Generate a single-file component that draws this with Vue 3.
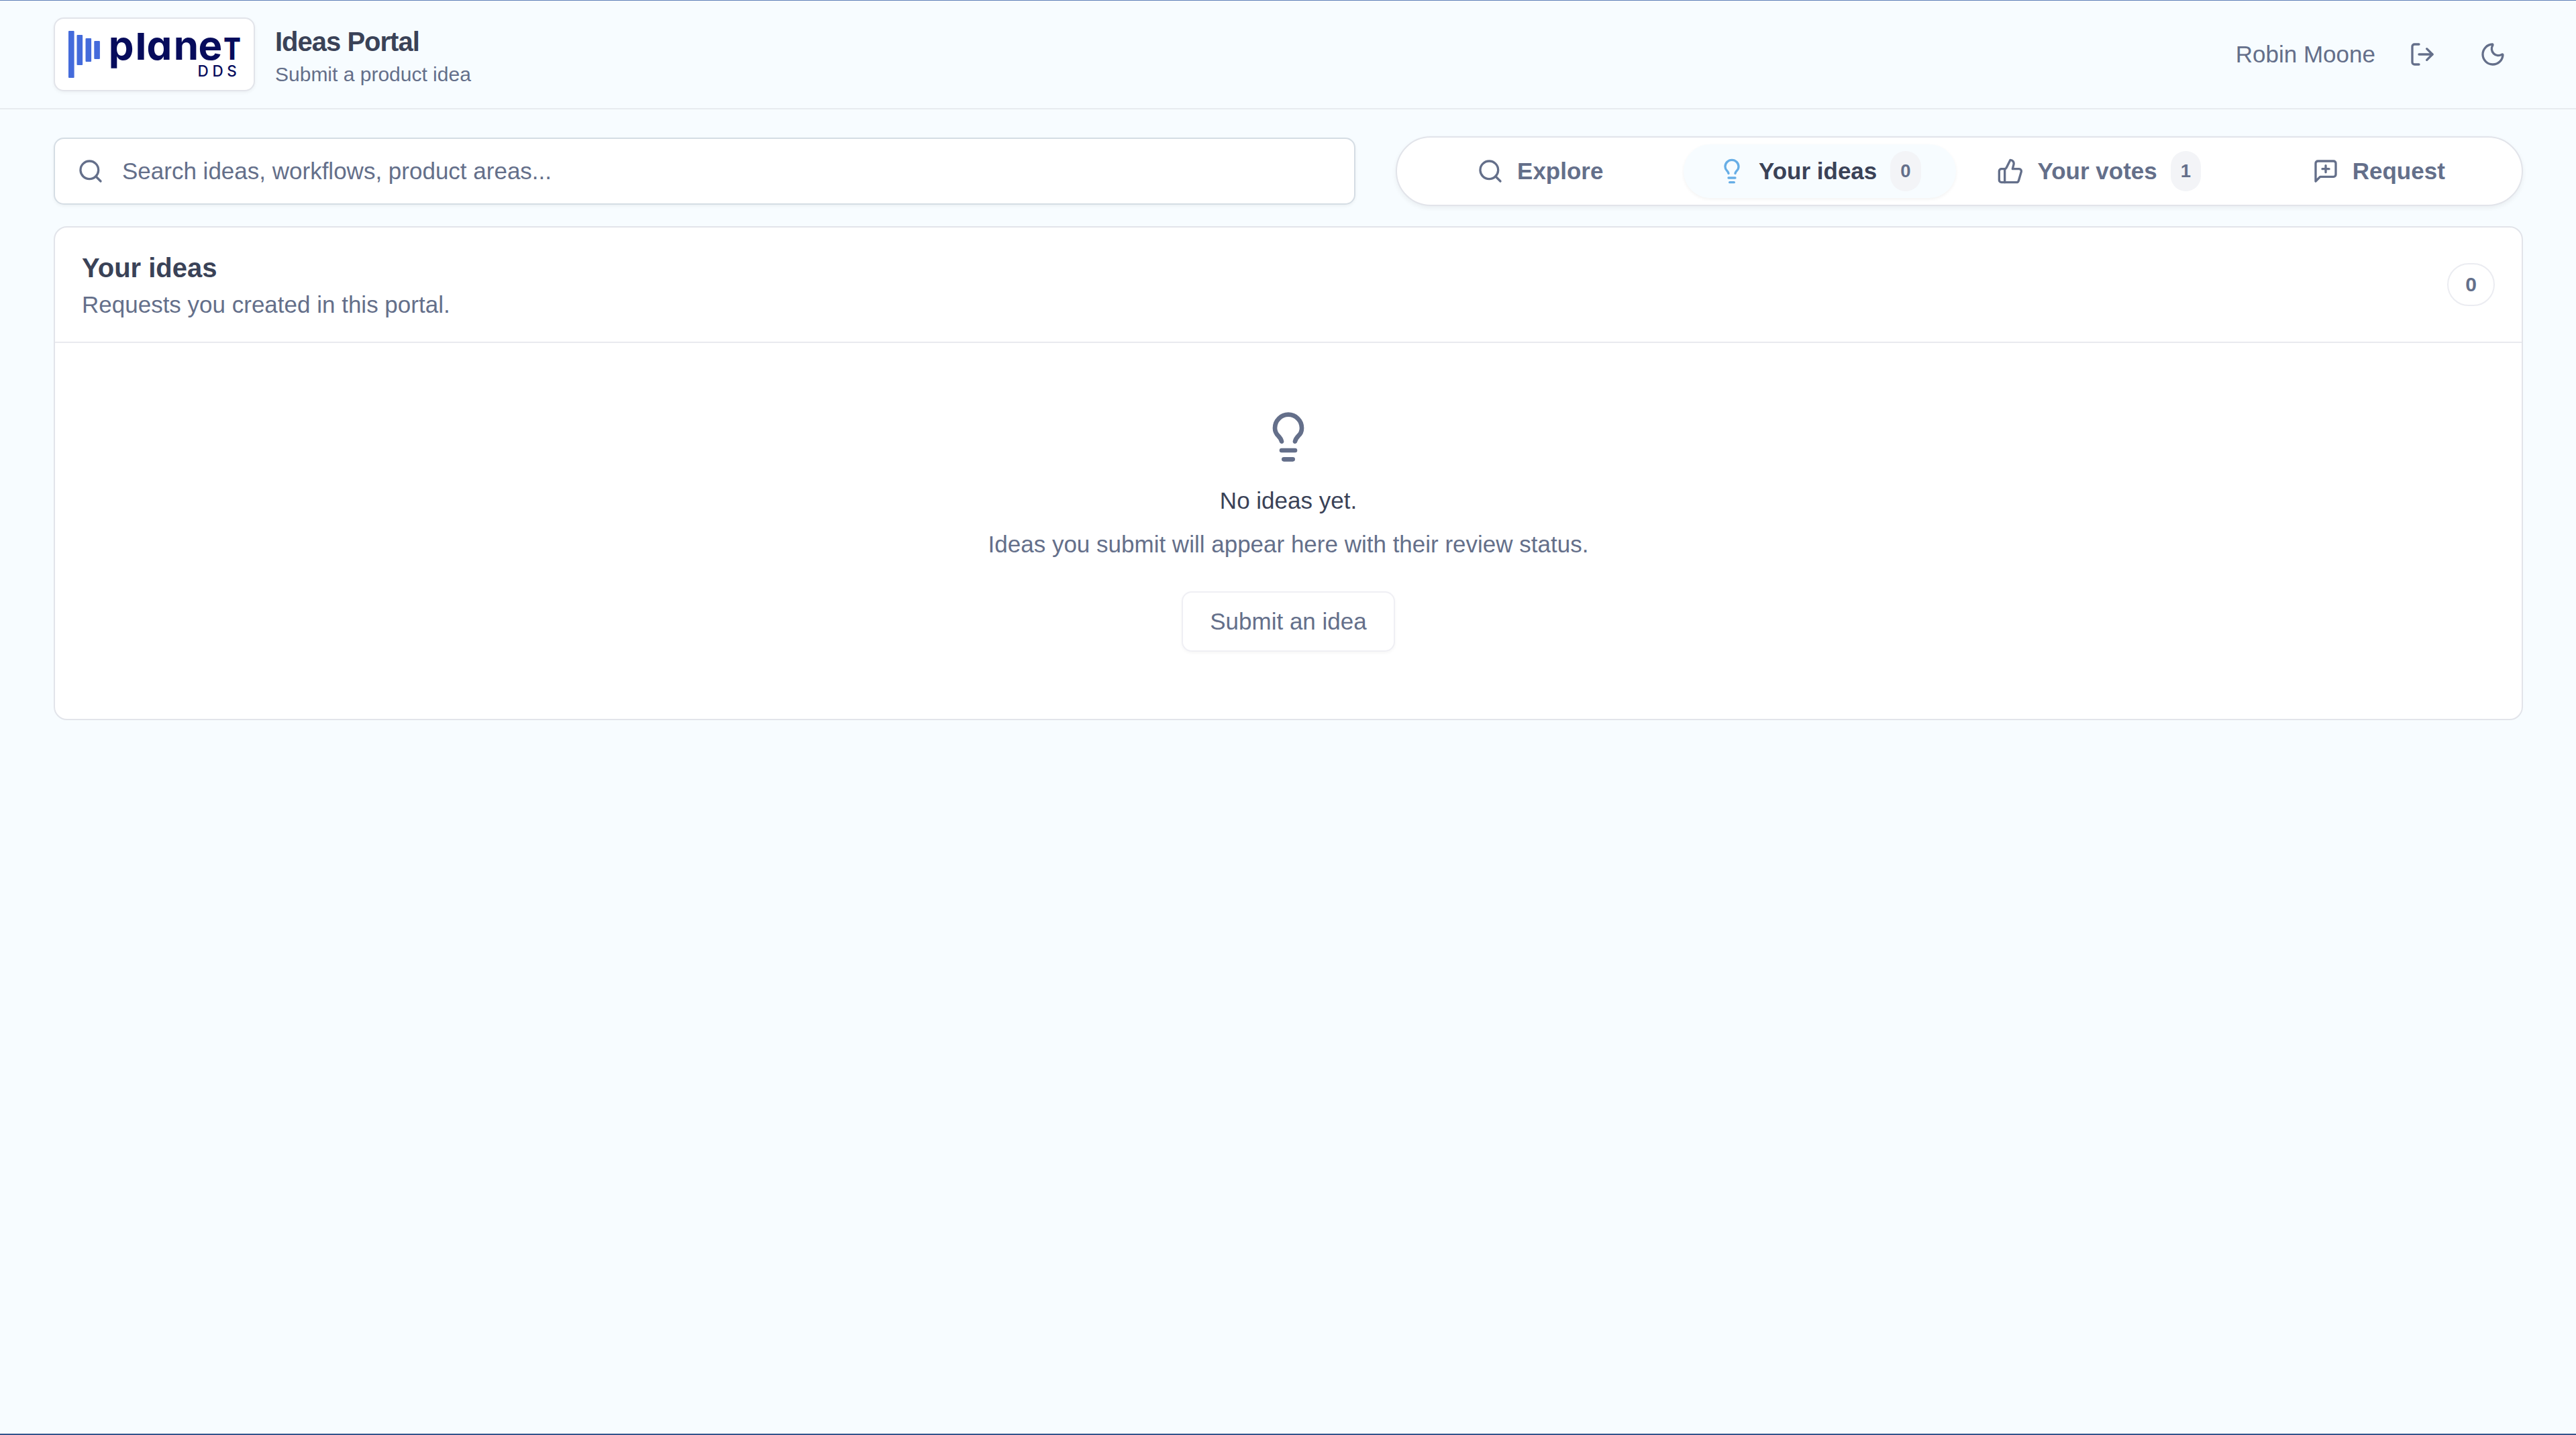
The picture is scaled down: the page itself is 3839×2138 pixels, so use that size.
<script setup>
import { ref } from "vue";

const user = "Robin Moone";
const search = ref("");
const activeTab = ref("ideas");

const tabs = [
  { id: "explore", label: "Explore", icon: "search" },
  { id: "ideas", label: "Your ideas", icon: "bulb", count: 0 },
  { id: "votes", label: "Your votes", icon: "thumb", count: 1 },
  { id: "request", label: "Request", icon: "message" },
];

const icons = {
  search: ["m21 21-4.34-4.34", "M19 11a8 8 0 1 1-16 0 8 8 0 0 1 16 0z"],
  bulb: [
    "M15 14c.2-1 .7-1.7 1.5-2.5 1-.9 1.5-2.2 1.5-3.5A6 6 0 0 0 6 8c0 1 .2 2.2 1.5 3.5.7.7 1.3 1.5 1.5 2.5",
    "M9 18h6",
    "M10 22h4",
  ],
  thumb: [
    "M7 10v12",
    "M15 5.88 14 10h5.83a2 2 0 0 1 1.92 2.56l-2.33 8A2 2 0 0 1 17.5 22H4a2 2 0 0 1-2-2v-8a2 2 0 0 1 2-2h2.76a2 2 0 0 0 1.79-1.11L12 2a3.13 3.13 0 0 1 3 3.88Z",
  ],
  message: [
    "M21 15a2 2 0 0 1-2 2H7l-4 4V5a2 2 0 0 1 2-2h14a2 2 0 0 1 2 2z",
    "M12 7v6",
    "M9 10h6",
  ],
  logout: [
    "m16 17 5-5-5-5",
    "M21 12H9",
    "M9 21H5a2 2 0 0 1-2-2V5a2 2 0 0 1 2-2h4",
  ],
  moon: [
    "M20.985 12.486a9 9 0 1 1-9.473-9.472c.405-.022.617.46.402.803a6 6 0 0 0 8.268 8.268c.344-.215.825-.004.803.401",
  ],
};
</script>

<template>
  <div class="page">
    <header class="header">
      <div class="logo">
        <svg width="296" height="106" viewBox="82 28 296 106">
          <g class="logo-bars">
            <rect x="102" y="46" width="8.6" height="70" rx="1" />
            <rect x="114.5" y="52" width="8.6" height="45" rx="1" />
            <rect x="127.5" y="57" width="8.6" height="35" rx="1" />
            <rect x="140.3" y="61" width="8.6" height="27" rx="1" />
          </g>
          <text class="logo-word" x="161.8" y="89">p<tspan class="logo-l" x="202.3">l</tspan><tspan x="218.5 258.8 295.5">ane</tspan><tspan class="logo-t" x="333.3" textLength="25.5" lengthAdjust="spacingAndGlyphs">t</tspan></text>
          <text class="logo-dds" x="294.6 316.6 338.2" y="114.3">DDS</text>
        </svg>
      </div>
      <div class="brand">
        <div class="brand-title">Ideas Portal</div>
        <div class="brand-sub">Submit a product idea</div>
      </div>
      <div class="account">
        <span class="user">{{ user }}</span>
        <button class="icon-btn" aria-label="Sign out">
          <svg class="icon" viewBox="0 0 24 24">
            <path v-for="d in icons.logout" :key="d" :d="d" />
          </svg>
        </button>
        <button class="icon-btn" aria-label="Theme">
          <svg class="icon" viewBox="0 0 24 24">
            <path v-for="d in icons.moon" :key="d" :d="d" />
          </svg>
        </button>
      </div>
    </header>

    <main class="main">
      <div class="toolbar">
        <label class="search">
          <svg class="icon" viewBox="0 0 24 24">
            <path v-for="d in icons.search" :key="d" :d="d" />
          </svg>
          <input v-model="search" type="text" placeholder="Search ideas, workflows, product areas..." />
        </label>
        <nav class="tabs">
          <button v-for="tab in tabs" :key="tab.id" class="tab" :class="{ active: tab.id === activeTab }"
            @click="activeTab = tab.id">
            <svg class="icon" viewBox="0 0 24 24">
              <path v-for="d in icons[tab.icon]" :key="d" :d="d" />
            </svg>
            <span>{{ tab.label }}</span>
            <span v-if="tab.count !== undefined" class="tab-count">{{ tab.count }}</span>
          </button>
        </nav>
      </div>

      <section class="card">
        <div class="card-header">
          <div>
            <div class="card-title">Your ideas</div>
            <div class="card-sub">Requests you created in this portal.</div>
          </div>
          <span class="card-count">0</span>
        </div>
        <div class="empty">
          <svg class="icon icon-large" viewBox="0 0 24 24">
            <path v-for="d in icons.bulb" :key="d" :d="d" />
          </svg>
          <div class="empty-title">No ideas yet.</div>
          <div class="empty-text">Ideas you submit will appear here with their review status.</div>
          <button class="submit">Submit an idea</button>
        </div>
      </section>
    </main>
  </div>
</template>

<style>
body {
  margin: 0;
  background: #f7fcff;
}
</style>

<style scoped>
.page {
  box-sizing: border-box;
  height: 2138px;
  display: flex;
  flex-direction: column;
  border-top: 1px solid #6080b8;
  border-bottom: 2px solid #33538c;
  background: #f7fcff;
  color: #646f8a;
  font-family: "Liberation Sans", Arial, sans-serif;
  font-size: 35px;
  line-height: 50px;
}

button {
  font: inherit;
  color: inherit;
  border: none;
  background: none;
  padding: 0;
  cursor: pointer;
}

.icon {
  width: 40px;
  height: 40px;
  flex-shrink: 0;
  fill: none;
  stroke: currentColor;
  stroke-width: 2;
  stroke-linecap: round;
  stroke-linejoin: round;
}

.header {
  height: 160px;
  display: flex;
  align-items: center;
  gap: 30px;
  padding: 0 79px 0 80px;
  border-bottom: 2px solid #e7ebef;
}

.logo {
  display: flex;
  border: 2px solid #e2e4ea;
  border-radius: 15px;
  background: #fff;
  box-shadow: 0 2px 5px rgba(0, 0, 0, 0.05);
}

.logo-bars {
  fill: #446bdb;
}

.logo-word {
  fill: #070c5c;
  font-family: Inter, sans-serif;
  font-weight: 700;
  font-size: 60px;
  font-feature-settings: "cv11";
}

.logo-l {
  font-size: 54.5px;
  font-weight: 800;
}

.logo-t {
  font-size: 45px;
  font-weight: 800;
  text-transform: uppercase;
}

.logo-dds {
  fill: #070c5c;
  font-family: Inter, sans-serif;
  font-weight: 500;
  font-size: 22.5px;
}

.brand {
  padding-top: 5px;
}

.brand-title {
  font-size: 40px;
  line-height: 50px;
  font-weight: 700;
  letter-spacing: -1px;
  color: #3a4257;
}

.brand-sub {
  margin-top: 4px;
  font-size: 30px;
  line-height: 40px;
}

.account {
  margin-left: auto;
  display: flex;
  align-items: center;
}

.user {
  margin-right: 25px;
}

.icon-btn {
  display: flex;
  align-items: center;
  justify-content: center;
  width: 90px;
  height: 90px;
}

.icon-btn + .icon-btn {
  margin-left: 15px;
}

.main {
  padding: 40px 79px 0 80px;
}

.toolbar {
  display: grid;
  grid-template-columns: 1940px 1680px;
  gap: 60px;
  align-items: center;
  margin-bottom: 30px;
}

.search {
  box-sizing: border-box;
  height: 100px;
  display: flex;
  align-items: center;
  gap: 27px;
  padding: 0 33px;
  border: 2px solid #d5dde4;
  border-radius: 15px;
  background: #fff;
  box-shadow: 0 2px 5px rgba(0, 0, 0, 0.05);
}

.search input {
  flex: 1;
  height: 50px;
  padding: 0;
  border: none;
  outline: none;
  background: none;
  font: inherit;
  color: #3a4257;
}

.search input::placeholder {
  color: #646f8a;
  opacity: 1;
}

.tabs {
  box-sizing: border-box;
  height: 104px;
  display: grid;
  grid-template-columns: repeat(4, 1fr);
  gap: 10px;
  padding: 10px;
  border: 2px solid #e2e4ea;
  border-radius: 52px;
  background: #fff;
  box-shadow: 0 3px 7px rgba(0, 0, 0, 0.06);
}

.tab {
  display: flex;
  align-items: center;
  justify-content: center;
  gap: 20px;
  border-radius: 40px;
  font-weight: 700;
}

.tab.active {
  background: #f7fcff;
  color: #3a4257;
  box-shadow: 0 2px 5px rgba(0, 0, 0, 0.05);
}

.tab.active .icon {
  color: #67aee6;
}

.tab-count {
  padding: 0 15px;
  border-radius: 30px;
  background: #f3f4f7;
  color: #646f8a;
  font-size: 27.5px;
  line-height: 60px;
}

.card {
  border: 2px solid #e2e4ea;
  border-radius: 20px;
  background: #fff;
}

.card-header {
  display: flex;
  align-items: center;
  justify-content: space-between;
  padding: 30px 40px;
  border-bottom: 2px solid #e9eaef;
}

.card-title {
  font-size: 40px;
  line-height: 60px;
  font-weight: 700;
  color: #3a4257;
}

.card-count {
  padding: 10px 25px;
  border: 2px solid #ebecf1;
  border-radius: 32px;
  font-size: 30px;
  line-height: 40px;
  font-weight: 700;
}

.empty {
  display: flex;
  flex-direction: column;
  align-items: center;
  padding: 100px 0;
}

.icon-large {
  width: 80px;
  height: 80px;
}

.empty-title {
  margin-top: 30px;
  color: #3a4257;
}

.empty-text {
  margin-top: 15px;
}

.submit {
  box-sizing: border-box;
  height: 90px;
  margin-top: 45px;
  padding: 0 40px;
  border: 2px solid #efeff4;
  border-radius: 15px;
  background: #fff;
  box-shadow: 0 2px 5px rgba(0, 0, 0, 0.04);
}
</style>
